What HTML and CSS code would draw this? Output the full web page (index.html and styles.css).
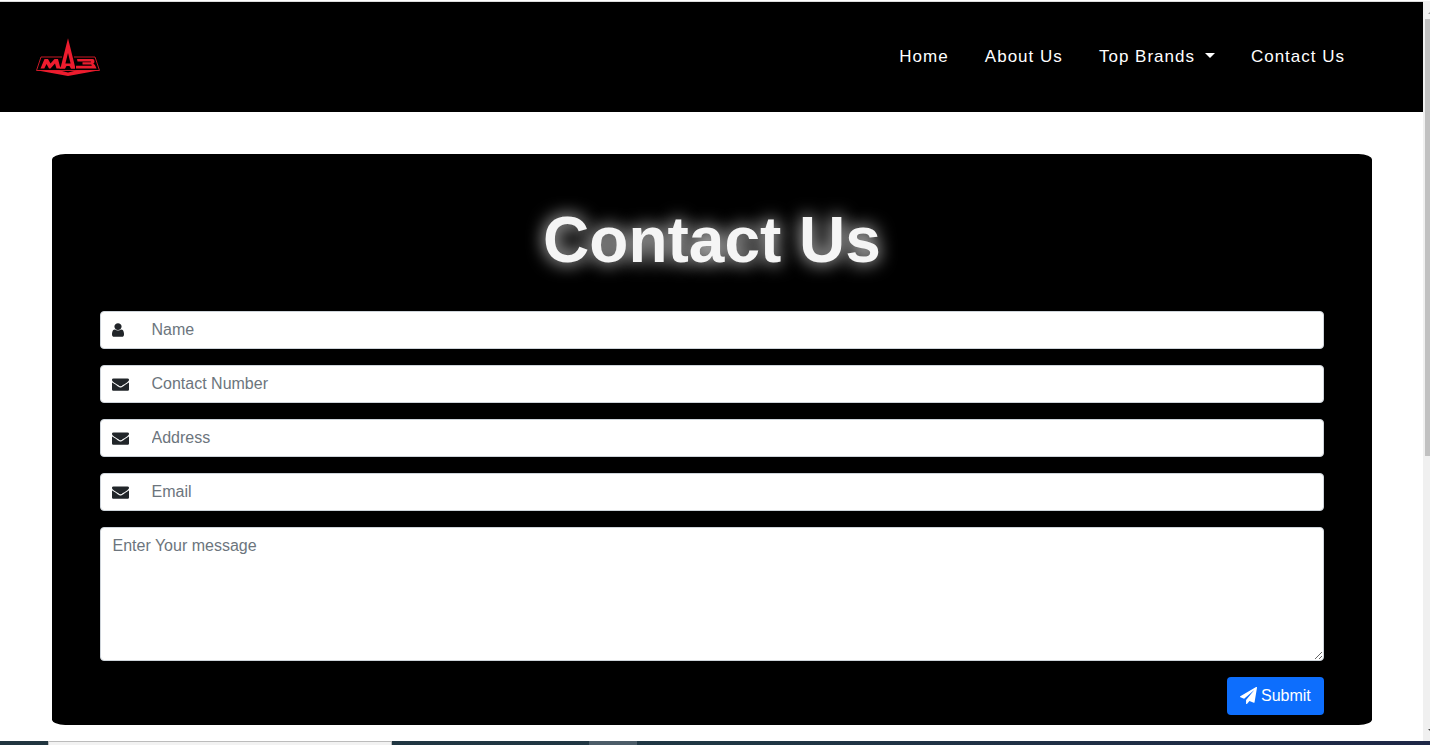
FILE: index.html
```html
<!DOCTYPE html>
<html lang="en">
<head>
<meta charset="utf-8">
<title>Contact Us</title>
<link rel="stylesheet" href="styles.css">
</head>
<body>
<svg class="symbols" aria-hidden="true">
  <symbol id="user" viewBox="256 0 1280 1792" preserveAspectRatio="none"><path d="M1536 1399q0 109-62.5 187t-150.5 78h-854q-88 0-150.5-78t-62.5-187q0-85 8.5-160.5t31.5-152 58.5-131 94-89 134.5-34.5q131 128 313 128t313-128q76 0 134.5 34.5t94 89 58.5 131 31.5 152 8.5 160.5zm-256-887q0 159-112.5 271.5t-271.5 112.5-271.5-112.5-112.5-271.5 112.5-271.5 271.5-112.5 271.5 112.5 112.5 271.5z"/></symbol>
  <symbol id="envelope" viewBox="0 0 1792 1792" preserveAspectRatio="none"><path d="M1792 710v794q0 66-47 113t-113 47h-1472q-66 0-113-47t-47-113v-794q44 49 101 87 362 246 497 345 57 42 92.5 65.5t94.5 48 110 24.5h2q51 0 110-24.5t94.5-48 92.5-65.5q170-123 498-345 57-39 100-87zm0-294q0 79-49 151t-122 123q-376 261-468 325-10 7-42.5 31t-54 38.5-52 32.5-57.5 27-50 9h-2q-23 0-50-9t-57.5-27-52-32.5-54-38.5-42.5-31q-91-64-262-177.5t-205-136.5q-62-42-117-115.5t-55-136.5q0-78 41.5-130t118.5-52h1472q65 0 112.5 47t47.5 113z"/></symbol>
  <symbol id="plane" viewBox="0 0 1792 1792"><path d="M1764 11q33 24 27 64l-256 1536q-5 29-32 45-14 8-31 8-11 0-24-5l-453-185-242 295q-18 23-49 23-13 0-22-4-19-7-30.5-23.5t-11.5-36.5v-349l864-1059-1069 925-395-162q-37-14-40-55-2-40 32-59l1664-960q15-9 32-9 20 0 36 11z"/></symbol>
</svg>
<div class="screen">
  <div class="viewport">
    <div class="page">
      <header class="navbar">
        <svg class="logo" viewBox="0 0 66 40">
          <path class="frame" d="M27 20H6L1.500 33.500H64.500L60 20H39"/>
          <path class="solid" d="M1.500 33.200H24L33 35.500 42 33.200H64.500L33 39z"/>
          <path class="solid" d="M33 1.300L40 29.500V31.700H36L34.500 29h-3L30 31.700H24.500L26 29zM33 16l-2.600 10.500h5.200z" fill-rule="evenodd"/>
          <path class="solid" d="M5.500 31.500L9.500 22h3.500l2.500 4.500L19.500 22h3.500L25.500 31.500H21.500L20 26.500 15.500 31.500H14L11.500 27 9.300 31.500z"/>
          <path class="solid" d="M42 22H57.500q2 0 2 2.200t-1.300 2.500q2 .5 3.300 4.800H41V28.700H56.800l-.5-1.200H47.500V25.200H56l-.2-.6H42.500z"/>
        </svg>
        <nav class="links">
          <a>Home</a><a>About Us</a><a>Top Brands <i class="caret"></i></a><a>Contact Us</a>
        </nav>
      </header>
      <form class="card">
        <h1>Contact Us</h1>
        <label class="field"><svg class="icon icon-user"><use href="#user"/></svg><input placeholder="Name"></label>
        <label class="field"><svg class="icon"><use href="#envelope"/></svg><input placeholder="Contact Number"></label>
        <label class="field"><svg class="icon"><use href="#envelope"/></svg><input placeholder="Address"></label>
        <label class="field"><svg class="icon"><use href="#envelope"/></svg><input placeholder="Email"></label>
        <textarea class="message" placeholder="Enter Your message"></textarea>
        <button class="submit" type="button"><svg class="icon-plane"><use href="#plane"/></svg>Submit</button>
      </form>
    </div>
    <div class="scrollbar"><i class="up"></i><div class="thumb"></div><i class="down"></i></div>
  </div>
  <div class="taskbar"><div class="search"></div><div class="app"></div></div>
</div>
</body>
</html>
```
FILE: styles.css
```css
* { box-sizing: border-box; }
body { margin: 0; background: #fff; font: 16px/24px "Liberation Sans", Arial, sans-serif; color: #212529; overflow: hidden; }
.symbols { display: none; }
.screen { display: flex; flex-direction: column; height: 745px; }
.viewport { display: flex; height: 741px; border-top: 1px solid #fff; }
.page { flex: 1; border-top: 1px solid #dcdcdc; }
.navbar { display: flex; align-items: center; justify-content: space-between; height: 110px; padding: 0 78px 0 35px; background: #000; }
.logo { width: 66px; height: 40px; }
.frame { fill: none; stroke: #c41825; stroke-width: 1; }
.solid { fill: #ed1c2e; }
.links { display: flex; gap: 36.2px; color: #fff; font-size: 17px; letter-spacing: 1px; white-space: nowrap; }
.caret { display: inline-block; margin-left: 4px; vertical-align: 4px; border: 5px solid transparent; border-top-color: #fff; border-bottom: 0; }
.card { display: flex; flex-direction: column; gap: 16px; height: 571px; margin: 42px 51px 0 52px; padding: 48px 48px 10px; background: #000; border-radius: 1%; }
h1 { margin: 0 0 16px; height: 77px; font-size: 64px; line-height: 77px; text-align: center; color: #f5f5f5; text-shadow: 0 0 18px #fff; }
.field { display: flex; align-items: center; height: 38px; padding: 0 12px 0 11px; background: #fff; border: 1px solid #ced4da; border-radius: 4px; }
.icon { width: 17px; height: 16px; margin: 0 22.5px 0 0; fill: #212529; }
.icon-user { width: 12px; margin-right: 27.5px; }
input { flex: 1; border: 0; outline: 0; padding: 0; height: 34px; margin-bottom: 1px; font: inherit; background: none; }
::placeholder { color: #6c757d; opacity: 1; }
.message { display: block; height: 134px; padding: 6px 12px 6px 11.5px; font: inherit; background: #fff; border: 1px solid #ced4da; border-radius: 4px; resize: vertical; }
.submit { display: flex; align-items: center; align-self: flex-end; gap: 4px; width: 97px; height: 38px; padding: 0 13px; border: 0; border-radius: 4px; background: #0d6efd; color: #fff; font: inherit; white-space: nowrap; }
.icon-plane { flex: none; width: 17px; height: 17px; margin-bottom: 1px; fill: #fff; }
.scrollbar { display: flex; flex-direction: column; width: 7px; padding: 9px 0 8px; background: #f0f0f0; overflow: hidden; }
.up { width: 0; margin-left: 5px; border: 4px solid transparent; border-bottom: 4px solid #a0a0a0; border-top: 0; }
.thumb { height: 437px; margin: 5px 0 auto 2px; background: #c1c1c1; }
.down { width: 0; margin-left: 5px; border: 4px solid transparent; border-top: 4px solid #505050; border-bottom: 0; }
.taskbar { display: flex; height: 4px; padding-left: 48px; background: linear-gradient(90deg, #21353f 0, #203744 50%, #1e2746 100%); }
.search { width: 344px; background: #f2f2f2; border: 1px solid #bcbcbc; border-bottom: 0; }
.app { width: 48px; margin-left: 197px; background: #4c5c68; }
```
